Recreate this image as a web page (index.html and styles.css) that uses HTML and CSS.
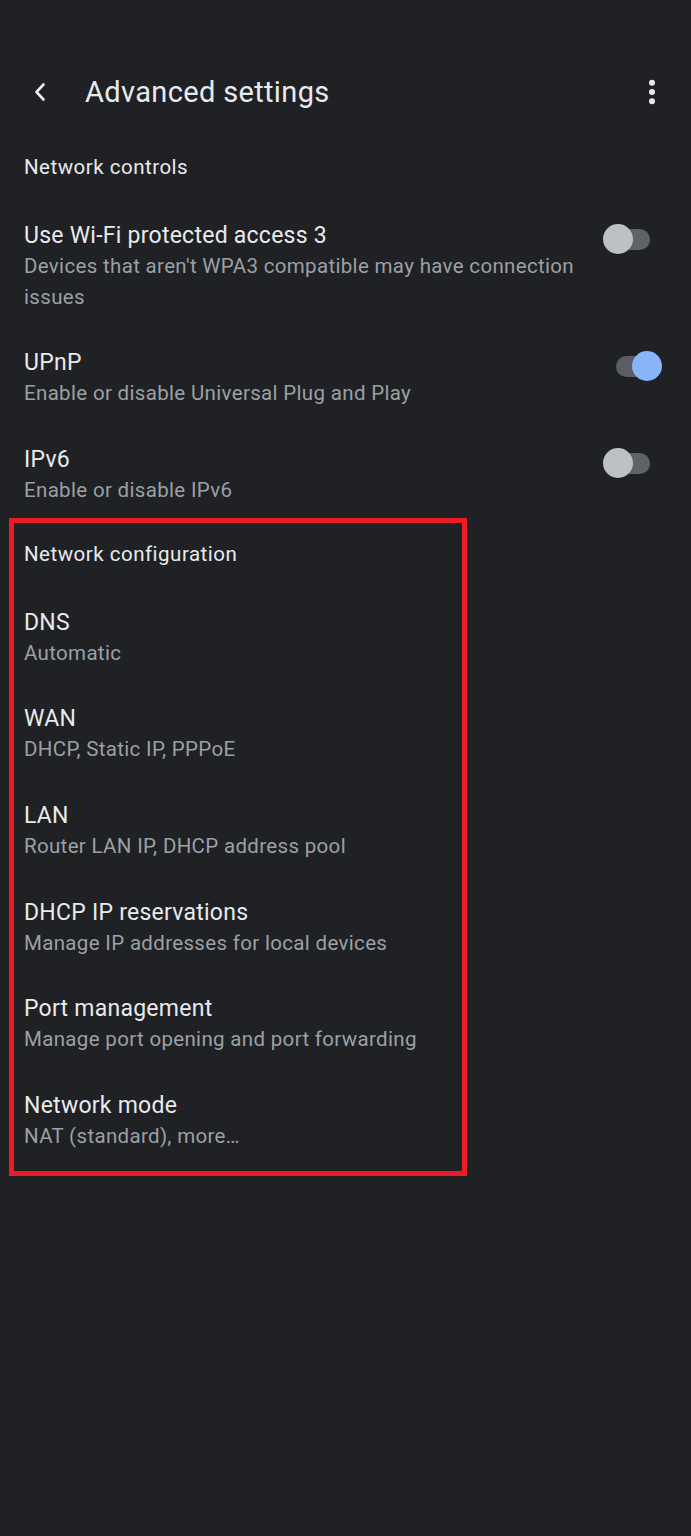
FILE: index.html
```html
<!DOCTYPE html>
<html lang="en">
<head>
<meta charset="utf-8">
<title>Advanced settings</title>
<link rel="stylesheet" href="styles.css">
</head>
<body>
<div class="screen">
  <header class="topbar">
    <div class="back">
      <svg width="14" height="20" viewBox="0 0 14 20"><path d="M10.5 2.5 L3.5 10 L10.5 17.5" fill="none" stroke="#e8eaed" stroke-width="2.6" stroke-linecap="round" stroke-linejoin="round"/></svg>
    </div>
    <h1 class="title">Advanced settings</h1>
    <div class="more">
      <svg width="10" height="30" viewBox="0 0 10 30"><circle cx="5" cy="5.7" r="3" fill="#e8eaed"/><circle cx="5" cy="15" r="3" fill="#e8eaed"/><circle cx="5" cy="24.3" r="3" fill="#e8eaed"/></svg>
    </div>
  </header>

  <section class="group">
    <h2 class="group-title">Network controls</h2>
    <div class="item">
      <div class="text">
        <div class="item-title">Use Wi-Fi protected access 3</div>
        <div class="item-sub">Devices that aren't WPA3 compatible may have connection issues</div>
      </div>
      <div class="switch off"><span class="track"></span><span class="thumb"></span></div>
    </div>
    <div class="item">
      <div class="text">
        <div class="item-title">UPnP</div>
        <div class="item-sub">Enable or disable Universal Plug and Play</div>
      </div>
      <div class="switch on"><span class="track"></span><span class="thumb"></span></div>
    </div>
    <div class="item">
      <div class="text">
        <div class="item-title">IPv6</div>
        <div class="item-sub">Enable or disable IPv6</div>
      </div>
      <div class="switch off"><span class="track"></span><span class="thumb"></span></div>
    </div>
  </section>

  <section class="group highlighted">
    <h2 class="group-title">Network configuration</h2>
    <div class="item"><div class="text"><div class="item-title">DNS</div><div class="item-sub">Automatic</div></div></div>
    <div class="item"><div class="text"><div class="item-title">WAN</div><div class="item-sub">DHCP, Static IP, PPPoE</div></div></div>
    <div class="item"><div class="text"><div class="item-title">LAN</div><div class="item-sub">Router LAN IP, DHCP address pool</div></div></div>
    <div class="item"><div class="text"><div class="item-title">DHCP IP reservations</div><div class="item-sub">Manage IP addresses for local devices</div></div></div>
    <div class="item"><div class="text"><div class="item-title">Port management</div><div class="item-sub">Manage port opening and port forwarding</div></div></div>
    <div class="item"><div class="text"><div class="item-title">Network mode</div><div class="item-sub">NAT (standard), more…</div></div></div>
  </section>
</div>
</body>
</html>
```

FILE: styles.css
```css
html, body {
  margin: 0;
  padding: 0;
  background: #202124;
}
body {
  font-family: Roboto, "Noto Sans", "Liberation Sans", sans-serif;
  color: #e8eaed;
  width: 691px;
  min-height: 1536px;
}
.screen {
  padding-top: 64px;
}
.topbar {
  display: flex;
  align-items: center;
  height: 56px;
  padding: 0 29px 0 33px;
}
.back {
  width: 14px;
  height: 20px;
  display: flex;
}
.title {
  margin: 0 0 0 38px;
  font-size: 29px;
  font-weight: 400;
  flex: 1;
  line-height: 56px;
  letter-spacing: 0.35px;
}
.more {
  width: 10px;
  height: 30px;
  display: flex;
  margin-right: 5px;
}
.group {
  padding: 35px 29px 0 24px;
}
.group-title {
  margin: 0;
  font-size: 20.5px;
  font-weight: 400;
  line-height: 24px;
  padding-bottom: 24px;
  letter-spacing: 0.5px;
}
.item {
  display: flex;
  align-items: flex-start;
  padding: 18.1px 0;
}
.text {
  flex: 1;
  min-width: 0;
}
.item-title {
  font-size: 23px;
  line-height: 30px;
  letter-spacing: 0.25px;
  color: #e8eaed;
}
.item-sub {
  font-size: 20.5px;
  line-height: 30.5px;
  letter-spacing: 0.33px;
  color: #9aa0a6;
}
.switch {
  position: relative;
  width: 59px;
  height: 30px;
  margin: 3px 0 0 24px;
  flex: none;
}
.track {
  position: absolute;
  top: 5px;
  width: 38px;
  height: 21px;
  border-radius: 11px;
  background: #5f6368;
}
.thumb {
  position: absolute;
  top: 0;
  width: 30px;
  height: 30px;
  border-radius: 50%;
  background: #bdc1c6;
}
.switch.off .track { left: 9px; }
.switch.off .thumb { left: 0; }
.switch.on .track { left: 13px; background: #5a5d62; }
.switch.on .thumb { left: 29px; background: #8ab4f8; }

.highlighted {
  margin: -6px 0 0 9px;
  box-sizing: border-box;
  width: 458px;
  border: 5px solid #ed1c24;
  padding: 19px 10px 1px 10px;
}
```
